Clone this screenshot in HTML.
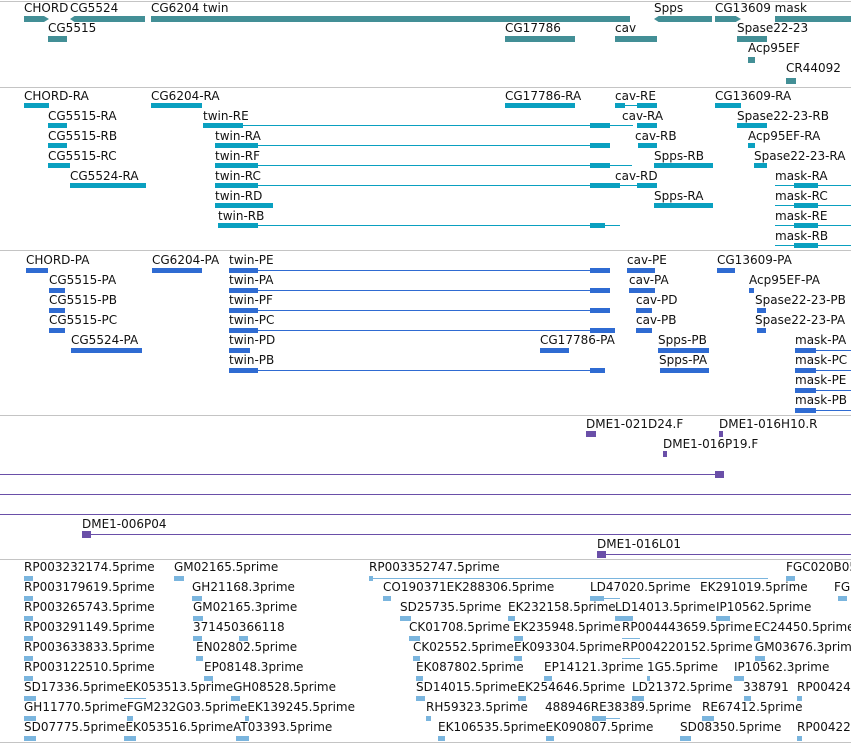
<!DOCTYPE html>
<html><head><meta charset="utf-8"><style>
body{margin:0;width:851px;height:743px;overflow:hidden;background:#fff;position:relative;font-family:"DejaVu Sans","Liberation Sans",sans-serif;font-size:12px;line-height:12px;color:#111}
div{position:absolute;white-space:nowrap}
.s{left:0;width:851px;height:1px;background:#c4c4c4}
.t1{background:#438f96;height:6px}
.t2{background:#0aa0c0;height:5px}
.t3{background:#2f6bd2;height:5px}
.t4{background:#6a4fa8}
.t5{background:#7ab5de;height:5px}
.ln2{background:#0aa0c0;height:1px}
.ln3{background:#2f6bd2;height:1px}
.ln5{background:#7ab5de;height:1px}
</style></head><body>
<div class="s" style="top:1px"></div>
<div class="s" style="top:87px"></div>
<div class="s" style="top:250px"></div>
<div class="s" style="top:415px"></div>
<div class="s" style="top:559px"></div>
<div class="s" style="top:742px"></div>

<!-- Track1 -->
<div style="left:24px;top:2px">CHORD</div><div class="t1" style="left:24px;top:16px;width:25px;clip-path:polygon(0 0,80% 0,100% 50%,80% 100%,0 100%)"></div>
<div style="left:70px;top:2px">CG5524</div><div class="t1" style="left:70px;top:16px;width:75px;clip-path:polygon(6% 0,100% 0,100% 100%,6% 100%,0 50%)"></div>
<div style="left:151px;top:2px">CG6204 twin</div><div class="t1" style="left:151px;top:16px;width:479px"></div>
<div style="left:654px;top:2px">Spps</div><div class="t1" style="left:654px;top:16px;width:58px;clip-path:polygon(8% 0,100% 0,100% 100%,8% 100%,0 50%)"></div>
<div style="left:715px;top:2px">CG13609 mask</div><div class="t1" style="left:715px;top:16px;width:26px;clip-path:polygon(0 0,80% 0,100% 50%,80% 100%,0 100%)"></div>
<div class="t1" style="left:775px;top:16px;width:76px"></div>
<div style="left:48px;top:22px">CG5515</div><div class="t1" style="left:48px;top:36px;width:19px"></div>
<div style="left:505px;top:22px">CG17786</div><div class="t1" style="left:505px;top:36px;width:70px"></div>
<div style="left:615px;top:22px">cav</div><div class="t1" style="left:615px;top:36px;width:42px"></div>
<div style="left:737px;top:22px">Spase22-23</div><div class="t1" style="left:737px;top:36px;width:30px"></div>
<div style="left:748px;top:42px">Acp95EF</div><div class="t1" style="left:748px;top:57px;width:7px"></div>
<div style="left:786px;top:62px">CR44092</div><div class="t1" style="left:786px;top:78px;width:10px"></div>

<!-- Track2 -->
<div style="left:24px;top:90px">CHORD-RA</div><div class="t2" style="left:24px;top:103px;width:25px"></div>
<div style="left:151px;top:90px">CG6204-RA</div><div class="t2" style="left:151px;top:103px;width:51px"></div>
<div style="left:505px;top:90px">CG17786-RA</div><div class="t2" style="left:505px;top:103px;width:70px"></div>
<div style="left:615px;top:90px">cav-RE</div><div class="t2" style="left:615px;top:103px;width:10px"></div><div class="ln2" style="left:625px;top:105px;width:12px"></div><div class="t2" style="left:637px;top:103px;width:20px"></div>
<div style="left:715px;top:90px">CG13609-RA</div><div class="t2" style="left:715px;top:103px;width:26px"></div>

<div style="left:48px;top:110px">CG5515-RA</div><div class="t2" style="left:48px;top:123px;width:19px"></div>
<div style="left:203px;top:110px">twin-RE</div><div class="t2" style="left:203px;top:123px;width:40px"></div><div class="ln2" style="left:243px;top:125px;width:390px"></div><div class="t2" style="left:590px;top:123px;width:20px"></div>
<div style="left:622px;top:110px">cav-RA</div><div class="t2" style="left:637px;top:123px;width:20px"></div>
<div style="left:737px;top:110px">Spase22-23-RB</div><div class="t2" style="left:737px;top:123px;width:30px"></div>

<div style="left:48px;top:130px">CG5515-RB</div><div class="t2" style="left:48px;top:143px;width:19px"></div>
<div style="left:215px;top:130px">twin-RA</div><div class="t2" style="left:215px;top:143px;width:43px"></div><div class="ln2" style="left:258px;top:145px;width:352px"></div><div class="t2" style="left:590px;top:143px;width:20px"></div>
<div style="left:635px;top:130px">cav-RB</div><div class="t2" style="left:638px;top:143px;width:19px"></div>
<div style="left:748px;top:130px">Acp95EF-RA</div><div class="t2" style="left:748px;top:143px;width:7px"></div>

<div style="left:48px;top:150px">CG5515-RC</div><div class="t2" style="left:48px;top:163px;width:22px"></div>
<div style="left:215px;top:150px">twin-RF</div><div class="t2" style="left:215px;top:163px;width:43px"></div><div class="ln2" style="left:258px;top:165px;width:374px"></div><div class="t2" style="left:590px;top:163px;width:20px"></div>
<div style="left:654px;top:150px">Spps-RB</div><div class="t2" style="left:654px;top:163px;width:59px"></div>
<div style="left:754px;top:150px">Spase22-23-RA</div><div class="t2" style="left:754px;top:163px;width:13px"></div>

<div style="left:70px;top:170px">CG5524-RA</div><div class="t2" style="left:70px;top:183px;width:76px"></div>
<div style="left:215px;top:170px">twin-RC</div><div class="t2" style="left:215px;top:183px;width:43px"></div><div class="ln2" style="left:258px;top:185px;width:399px"></div><div class="t2" style="left:590px;top:183px;width:30px"></div><div class="t2" style="left:637px;top:183px;width:20px"></div>
<div style="left:615px;top:170px">cav-RD</div>
<div style="left:775px;top:170px">mask-RA</div><div class="ln2" style="left:775px;top:185px;width:76px"></div><div class="t2" style="left:794px;top:183px;width:24px"></div>

<div style="left:215px;top:190px">twin-RD</div><div class="t2" style="left:215px;top:203px;width:58px"></div>
<div style="left:654px;top:190px">Spps-RA</div><div class="t2" style="left:654px;top:203px;width:59px"></div>
<div style="left:775px;top:190px">mask-RC</div><div class="ln2" style="left:775px;top:205px;width:76px"></div><div class="t2" style="left:794px;top:203px;width:24px"></div>

<div style="left:218px;top:210px">twin-RB</div><div class="t2" style="left:218px;top:223px;width:40px"></div><div class="ln2" style="left:258px;top:225px;width:362px"></div><div class="t2" style="left:590px;top:223px;width:15px"></div>
<div style="left:775px;top:210px">mask-RE</div><div class="ln2" style="left:775px;top:225px;width:76px"></div><div class="t2" style="left:794px;top:223px;width:24px"></div>
<div style="left:775px;top:230px">mask-RB</div><div class="ln2" style="left:775px;top:245px;width:76px"></div><div class="t2" style="left:794px;top:243px;width:24px"></div>

<!-- Track3 -->
<div style="left:26px;top:254px">CHORD-PA</div><div class="t3" style="left:26px;top:268px;width:22px"></div>
<div style="left:152px;top:254px">CG6204-PA</div><div class="t3" style="left:152px;top:268px;width:50px"></div>
<div style="left:229px;top:254px">twin-PE</div><div class="t3" style="left:229px;top:268px;width:29px"></div><div class="ln3" style="left:258px;top:270px;width:352px"></div><div class="t3" style="left:590px;top:268px;width:20px"></div>
<div style="left:627px;top:254px">cav-PE</div><div class="t3" style="left:627px;top:268px;width:28px"></div>
<div style="left:717px;top:254px">CG13609-PA</div><div class="t3" style="left:717px;top:268px;width:18px"></div>

<div style="left:49px;top:274px">CG5515-PA</div><div class="t3" style="left:49px;top:288px;width:16px"></div>
<div style="left:229px;top:274px">twin-PA</div><div class="t3" style="left:229px;top:288px;width:29px"></div><div class="ln3" style="left:258px;top:290px;width:352px"></div><div class="t3" style="left:590px;top:288px;width:20px"></div>
<div style="left:629px;top:274px">cav-PA</div><div class="t3" style="left:629px;top:288px;width:26px"></div>
<div style="left:749px;top:274px">Acp95EF-PA</div><div class="t3" style="left:749px;top:288px;width:5px"></div>

<div style="left:49px;top:294px">CG5515-PB</div><div class="t3" style="left:49px;top:308px;width:16px"></div>
<div style="left:229px;top:294px">twin-PF</div><div class="t3" style="left:229px;top:308px;width:29px"></div><div class="ln3" style="left:258px;top:310px;width:352px"></div><div class="t3" style="left:590px;top:308px;width:20px"></div>
<div style="left:636px;top:294px">cav-PD</div><div class="t3" style="left:636px;top:308px;width:16px"></div>
<div style="left:755px;top:294px">Spase22-23-PB</div><div class="t3" style="left:757px;top:308px;width:9px"></div>

<div style="left:49px;top:314px">CG5515-PC</div><div class="t3" style="left:49px;top:328px;width:16px"></div>
<div style="left:229px;top:314px">twin-PC</div><div class="t3" style="left:229px;top:328px;width:29px"></div><div class="ln3" style="left:258px;top:330px;width:357px"></div><div class="t3" style="left:590px;top:328px;width:25px"></div>
<div style="left:636px;top:314px">cav-PB</div><div class="t3" style="left:636px;top:328px;width:16px"></div>
<div style="left:755px;top:314px">Spase22-23-PA</div><div class="t3" style="left:757px;top:328px;width:9px"></div>

<div style="left:71px;top:334px">CG5524-PA</div><div class="t3" style="left:71px;top:348px;width:71px"></div>
<div style="left:229px;top:334px">twin-PD</div><div class="t3" style="left:229px;top:348px;width:21px"></div>
<div style="left:540px;top:334px">CG17786-PA</div><div class="t3" style="left:540px;top:348px;width:29px"></div>
<div style="left:658px;top:334px">Spps-PB</div><div class="t3" style="left:658px;top:348px;width:51px"></div>
<div style="left:795px;top:334px">mask-PA</div><div class="t3" style="left:795px;top:348px;width:21px"></div><div class="ln3" style="left:816px;top:350px;width:35px"></div>

<div style="left:229px;top:354px">twin-PB</div><div class="t3" style="left:229px;top:368px;width:29px"></div><div class="ln3" style="left:258px;top:370px;width:347px"></div><div class="t3" style="left:590px;top:368px;width:15px"></div>
<div style="left:659px;top:354px">Spps-PA</div><div class="t3" style="left:660px;top:368px;width:49px"></div>
<div style="left:795px;top:354px">mask-PC</div><div class="t3" style="left:795px;top:368px;width:21px"></div><div class="ln3" style="left:816px;top:370px;width:35px"></div>
<div style="left:795px;top:374px">mask-PE</div><div class="t3" style="left:795px;top:388px;width:21px"></div><div class="ln3" style="left:816px;top:390px;width:35px"></div>
<div style="left:795px;top:394px">mask-PB</div><div class="t3" style="left:795px;top:408px;width:21px"></div><div class="ln3" style="left:816px;top:410px;width:35px"></div>

<!-- Track4 -->
<div style="left:586px;top:418px">DME1-021D24.F</div><div class="t4" style="left:586px;top:431px;width:10px;height:6px"></div>
<div style="left:719px;top:418px">DME1-016H10.R</div><div class="t4" style="left:719px;top:431px;width:4px;height:6px"></div>
<div style="left:663px;top:438px">DME1-016P19.F</div><div class="t4" style="left:663px;top:451px;width:4px;height:6px"></div>
<div class="t4" style="left:0;top:474px;width:724px;height:1px"></div><div class="t4" style="left:715px;top:471px;width:9px;height:7px"></div>
<div class="t4" style="left:0;top:494px;width:851px;height:1px"></div>
<div class="t4" style="left:0;top:514px;width:851px;height:1px"></div>
<div style="left:82px;top:518px">DME1-006P04</div><div class="t4" style="left:82px;top:534px;width:769px;height:1px"></div><div class="t4" style="left:82px;top:531px;width:9px;height:7px"></div>
<div style="left:597px;top:538px">DME1-016L01</div><div class="t4" style="left:597px;top:554px;width:254px;height:1px"></div><div class="t4" style="left:597px;top:551px;width:9px;height:7px"></div>

<!-- Track5 -->
<div style="left:24px;top:561px">RP003232174.5prime</div><div class="t5" style="left:24px;top:576px;width:9px"></div>
<div style="left:174px;top:561px">GM02165.5prime</div><div class="t5" style="left:174px;top:576px;width:10px"></div>
<div style="left:369px;top:561px">RP003352747.5prime</div><div class="ln5" style="left:369px;top:578px;width:399px"></div><div class="t5" style="left:369px;top:576px;width:4px"></div>
<div style="left:786px;top:561px">FGC020B05</div><div class="t5" style="left:786px;top:576px;width:9px"></div>

<div style="left:24px;top:581px">RP003179619.5prime</div><div class="t5" style="left:24px;top:596px;width:9px"></div>
<div style="left:192px;top:581px">GH21168.3prime</div><div class="t5" style="left:192px;top:596px;width:10px"></div>
<div style="left:383px;top:581px">CO190371EK288306.5prime</div><div class="t5" style="left:383px;top:596px;width:8px"></div>
<div style="left:590px;top:581px">LD47020.5prime</div><div class="ln5" style="left:590px;top:598px;width:30px"></div><div class="t5" style="left:590px;top:596px;width:14px"></div>
<div style="left:700px;top:581px">EK291019.5prime</div>
<div style="left:834px;top:581px">FGI</div><div class="t5" style="left:838px;top:596px;width:9px"></div>

<div style="left:24px;top:601px">RP003265743.5prime</div><div class="t5" style="left:24px;top:616px;width:9px"></div>
<div style="left:193px;top:601px">GM02165.3prime</div><div class="t5" style="left:193px;top:616px;width:10px"></div>
<div style="left:400px;top:601px">SD25735.5prime</div><div class="t5" style="left:400px;top:616px;width:11px"></div>
<div style="left:508px;top:601px">EK232158.5prime</div><div class="t5" style="left:508px;top:616px;width:7px"></div>
<div style="left:615px;top:601px">LD14013.5prime</div><div class="t5" style="left:615px;top:616px;width:18px"></div>
<div style="left:716px;top:601px">IP10562.5prime</div><div class="t5" style="left:716px;top:616px;width:14px"></div>

<div style="left:24px;top:621px">RP003291149.5prime</div><div class="t5" style="left:24px;top:636px;width:9px"></div>
<div style="left:193px;top:621px">371450366118</div><div class="t5" style="left:193px;top:636px;width:9px"></div><div class="t5" style="left:239px;top:636px;width:9px"></div>
<div style="left:409px;top:621px">CK01708.5prime</div><div class="t5" style="left:409px;top:636px;width:11px"></div>
<div style="left:513px;top:621px">EK235948.5prime</div><div class="t5" style="left:514px;top:636px;width:9px"></div>
<div style="left:622px;top:621px">RP004443659.5prime</div><div class="ln5" style="left:622px;top:638px;width:18px"></div>
<div style="left:754px;top:621px">EC24450.5prime</div><div class="t5" style="left:754px;top:636px;width:6px"></div>

<div style="left:24px;top:641px">RP003633833.5prime</div><div class="t5" style="left:24px;top:656px;width:9px"></div>
<div style="left:196px;top:641px">EN02802.5prime</div><div class="t5" style="left:196px;top:656px;width:7px"></div>
<div style="left:413px;top:641px">CK02552.5prime</div><div class="t5" style="left:413px;top:656px;width:7px"></div>
<div style="left:514px;top:641px">EK093304.5prime</div><div class="t5" style="left:514px;top:656px;width:8px"></div>
<div style="left:622px;top:641px">RP004220152.5prime</div><div class="ln5" style="left:622px;top:658px;width:18px"></div>
<div style="left:755px;top:641px">GM03676.3prime</div><div class="t5" style="left:755px;top:656px;width:10px"></div>

<div style="left:24px;top:661px">RP003122510.5prime</div><div class="t5" style="left:24px;top:676px;width:9px"></div>
<div style="left:204px;top:661px">EP08148.3prime</div><div class="t5" style="left:204px;top:676px;width:9px"></div>
<div style="left:416px;top:661px">EK087802.5prime</div><div class="t5" style="left:416px;top:676px;width:7px"></div>
<div style="left:544px;top:661px">EP14121.3prime</div><div class="t5" style="left:544px;top:676px;width:8px"></div>
<div style="left:647px;top:661px">1G5.5prime</div><div class="t5" style="left:647px;top:676px;width:3px"></div>
<div style="left:734px;top:661px">IP10562.3prime</div><div class="t5" style="left:734px;top:676px;width:10px"></div>

<div style="left:24px;top:681px">SD17336.5primeEK053513.5primeGH08528.5prime</div><div class="t5" style="left:24px;top:696px;width:12px"></div><div class="ln5" style="left:124px;top:698px;width:22px"></div><div class="t5" style="left:231px;top:696px;width:9px"></div>
<div style="left:416px;top:681px">SD14015.5primeEK254646.5prime</div><div class="t5" style="left:416px;top:696px;width:9px"></div><div class="t5" style="left:518px;top:696px;width:8px"></div>
<div style="left:632px;top:681px">LD21372.5prime</div><div class="t5" style="left:632px;top:696px;width:12px"></div>
<div style="left:743px;top:681px">338791</div><div class="t5" style="left:744px;top:696px;width:7px"></div>
<div style="left:797px;top:681px">RP00424</div><div class="t5" style="left:797px;top:696px;width:5px"></div>

<div style="left:24px;top:701px">GH11770.5primeFGM232G03.5primeEK139245.5prime</div><div class="t5" style="left:24px;top:716px;width:12px"></div><div class="t5" style="left:127px;top:716px;width:6px"></div><div class="t5" style="left:245px;top:716px;width:4px"></div>
<div style="left:426px;top:701px">RH59323.5prime</div><div class="t5" style="left:426px;top:716px;width:5px"></div>
<div style="left:545px;top:701px">488946RE38389.5prime</div><div class="ln5" style="left:592px;top:718px;width:28px"></div><div class="t5" style="left:592px;top:716px;width:14px"></div>
<div style="left:702px;top:701px">RE67412.5prime</div><div class="t5" style="left:702px;top:716px;width:12px"></div>

<div style="left:24px;top:721px">SD07775.5primeEK053516.5primeAT03393.5prime</div><div class="t5" style="left:24px;top:736px;width:12px"></div><div class="t5" style="left:124px;top:736px;width:12px"></div><div class="t5" style="left:236px;top:736px;width:13px"></div>
<div style="left:438px;top:721px">EK106535.5primeEK090807.5prime</div><div class="t5" style="left:438px;top:736px;width:7px"></div><div class="t5" style="left:546px;top:736px;width:8px"></div>
<div style="left:680px;top:721px">SD08350.5prime</div><div class="t5" style="left:680px;top:736px;width:11px"></div>
<div style="left:797px;top:721px">RP00422</div><div class="t5" style="left:797px;top:736px;width:5px"></div>
</body></html>
